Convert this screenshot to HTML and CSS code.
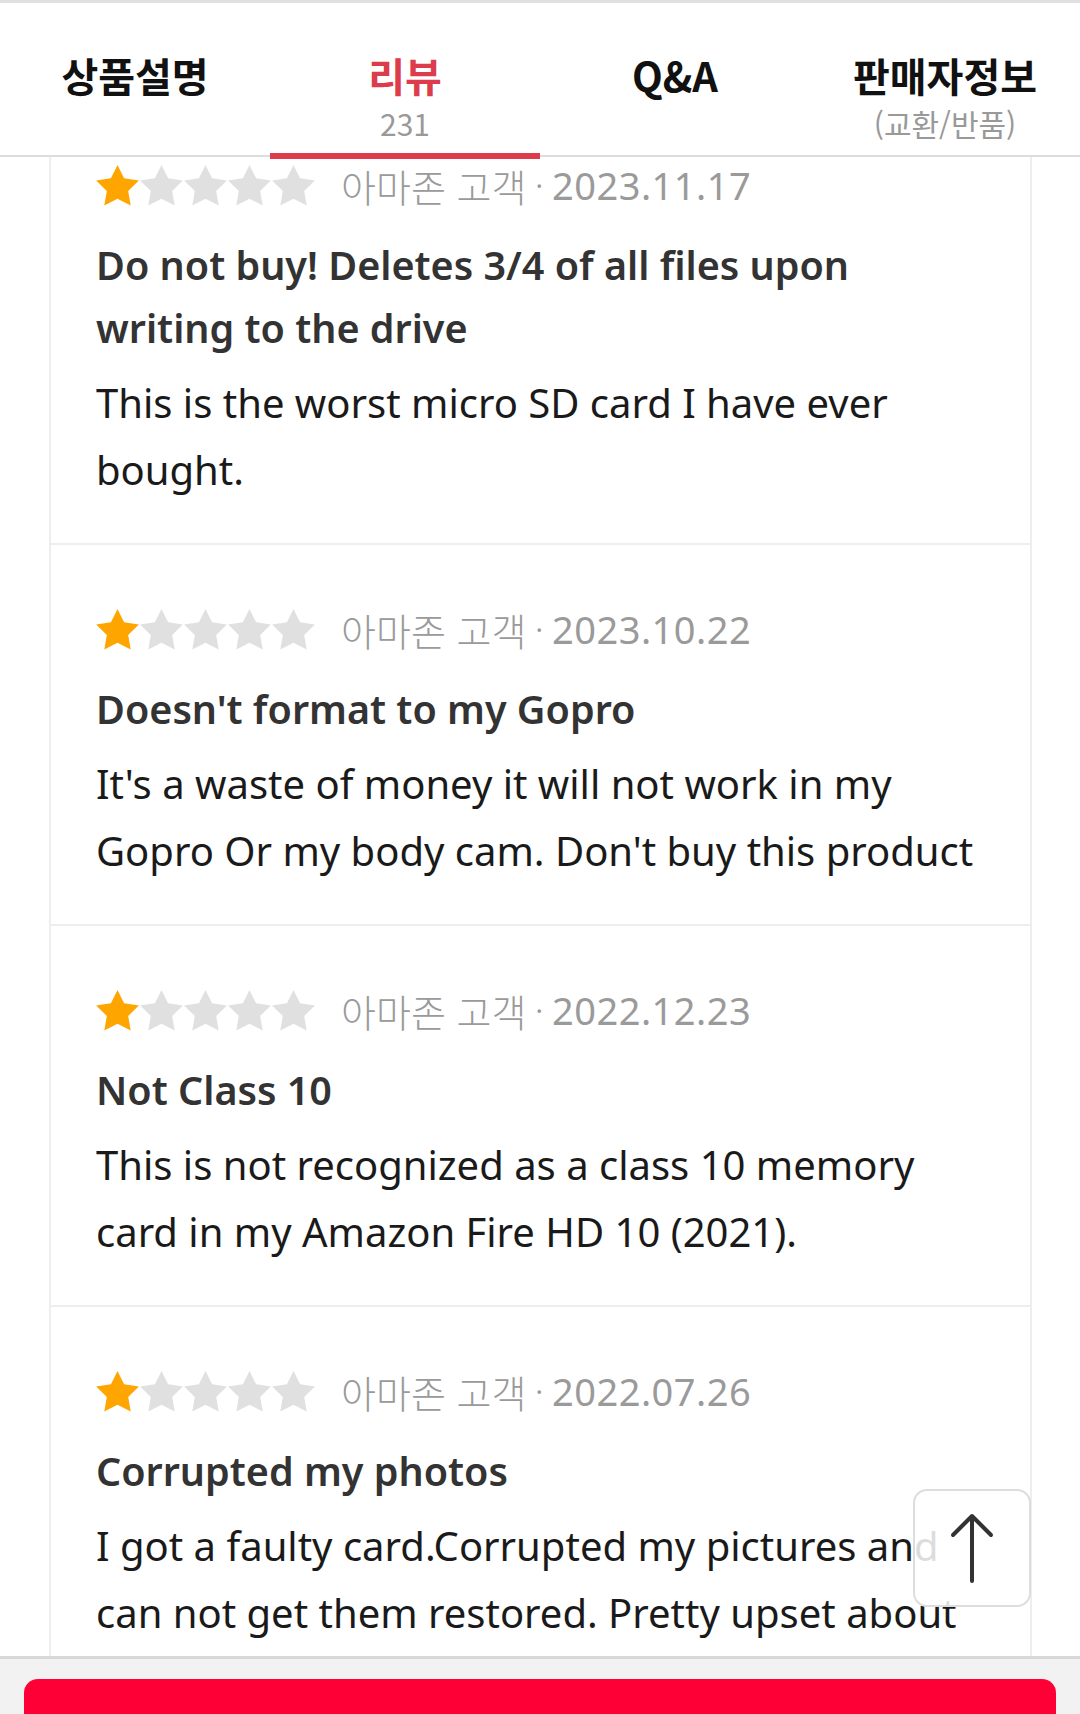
FILE: index.html
```html
<!DOCTYPE html>
<html lang="ko">
<head>
  <meta charset="UTF-8">
  <title>리뷰</title>
  <link rel="stylesheet" href="styles.css">
</head>
<body>
  <div id="page">
    <div id="tabs">
      <div class="tab">
        <span class="tab-title">상품설명</span>
      </div>
      <div class="tab active">
        <span class="tab-title">리뷰</span>
        <span class="tab-sub">231</span>
      </div>
      <div class="tab">
        <span class="tab-title">Q&amp;A</span>
      </div>
      <div class="tab">
        <span class="tab-title">판매자정보</span>
        <span class="tab-sub">(교환/반품)</span>
      </div>
    </div>

    <div id="reviews">
      <div class="review-list">
        <div class="review">
          <div class="review-meta">
            <div class="stars">
              <svg class="star on" viewBox="2 2 20 19.2"><polygon points="12,2 15.09,8.26 22,9.27 17,14.14 18.18,21.02 12,17.77 5.82,21.02 7,14.14 2,9.27 8.91,8.26"/></svg>
              <svg class="star" viewBox="2 2 20 19.2"><polygon points="12,2 15.09,8.26 22,9.27 17,14.14 18.18,21.02 12,17.77 5.82,21.02 7,14.14 2,9.27 8.91,8.26"/></svg>
              <svg class="star" viewBox="2 2 20 19.2"><polygon points="12,2 15.09,8.26 22,9.27 17,14.14 18.18,21.02 12,17.77 5.82,21.02 7,14.14 2,9.27 8.91,8.26"/></svg>
              <svg class="star" viewBox="2 2 20 19.2"><polygon points="12,2 15.09,8.26 22,9.27 17,14.14 18.18,21.02 12,17.77 5.82,21.02 7,14.14 2,9.27 8.91,8.26"/></svg>
              <svg class="star" viewBox="2 2 20 19.2"><polygon points="12,2 15.09,8.26 22,9.27 17,14.14 18.18,21.02 12,17.77 5.82,21.02 7,14.14 2,9.27 8.91,8.26"/></svg>
            </div>
            <span class="author">아마존 고객</span><span class="dot">·</span><span class="date">2023.11.17</span>
          </div>
          <div class="review-title">Do not buy! Deletes 3/4 of all files upon writing to the drive</div>
          <div class="review-body">This is the worst micro SD card I have ever bought.</div>
        </div>

        <div class="review">
          <div class="review-meta">
            <div class="stars">
              <svg class="star on" viewBox="2 2 20 19.2"><polygon points="12,2 15.09,8.26 22,9.27 17,14.14 18.18,21.02 12,17.77 5.82,21.02 7,14.14 2,9.27 8.91,8.26"/></svg>
              <svg class="star" viewBox="2 2 20 19.2"><polygon points="12,2 15.09,8.26 22,9.27 17,14.14 18.18,21.02 12,17.77 5.82,21.02 7,14.14 2,9.27 8.91,8.26"/></svg>
              <svg class="star" viewBox="2 2 20 19.2"><polygon points="12,2 15.09,8.26 22,9.27 17,14.14 18.18,21.02 12,17.77 5.82,21.02 7,14.14 2,9.27 8.91,8.26"/></svg>
              <svg class="star" viewBox="2 2 20 19.2"><polygon points="12,2 15.09,8.26 22,9.27 17,14.14 18.18,21.02 12,17.77 5.82,21.02 7,14.14 2,9.27 8.91,8.26"/></svg>
              <svg class="star" viewBox="2 2 20 19.2"><polygon points="12,2 15.09,8.26 22,9.27 17,14.14 18.18,21.02 12,17.77 5.82,21.02 7,14.14 2,9.27 8.91,8.26"/></svg>
            </div>
            <span class="author">아마존 고객</span><span class="dot">·</span><span class="date">2023.10.22</span>
          </div>
          <div class="review-title">Doesn't format to my Gopro</div>
          <div class="review-body">It's a waste of money it will not work in my Gopro Or my body cam. Don't buy this product</div>
        </div>

        <div class="review">
          <div class="review-meta">
            <div class="stars">
              <svg class="star on" viewBox="2 2 20 19.2"><polygon points="12,2 15.09,8.26 22,9.27 17,14.14 18.18,21.02 12,17.77 5.82,21.02 7,14.14 2,9.27 8.91,8.26"/></svg>
              <svg class="star" viewBox="2 2 20 19.2"><polygon points="12,2 15.09,8.26 22,9.27 17,14.14 18.18,21.02 12,17.77 5.82,21.02 7,14.14 2,9.27 8.91,8.26"/></svg>
              <svg class="star" viewBox="2 2 20 19.2"><polygon points="12,2 15.09,8.26 22,9.27 17,14.14 18.18,21.02 12,17.77 5.82,21.02 7,14.14 2,9.27 8.91,8.26"/></svg>
              <svg class="star" viewBox="2 2 20 19.2"><polygon points="12,2 15.09,8.26 22,9.27 17,14.14 18.18,21.02 12,17.77 5.82,21.02 7,14.14 2,9.27 8.91,8.26"/></svg>
              <svg class="star" viewBox="2 2 20 19.2"><polygon points="12,2 15.09,8.26 22,9.27 17,14.14 18.18,21.02 12,17.77 5.82,21.02 7,14.14 2,9.27 8.91,8.26"/></svg>
            </div>
            <span class="author">아마존 고객</span><span class="dot">·</span><span class="date">2022.12.23</span>
          </div>
          <div class="review-title">Not Class 10</div>
          <div class="review-body">This is not recognized as a class 10 memory card in my Amazon Fire HD 10 (2021).</div>
        </div>

        <div class="review">
          <div class="review-meta">
            <div class="stars">
              <svg class="star on" viewBox="2 2 20 19.2"><polygon points="12,2 15.09,8.26 22,9.27 17,14.14 18.18,21.02 12,17.77 5.82,21.02 7,14.14 2,9.27 8.91,8.26"/></svg>
              <svg class="star" viewBox="2 2 20 19.2"><polygon points="12,2 15.09,8.26 22,9.27 17,14.14 18.18,21.02 12,17.77 5.82,21.02 7,14.14 2,9.27 8.91,8.26"/></svg>
              <svg class="star" viewBox="2 2 20 19.2"><polygon points="12,2 15.09,8.26 22,9.27 17,14.14 18.18,21.02 12,17.77 5.82,21.02 7,14.14 2,9.27 8.91,8.26"/></svg>
              <svg class="star" viewBox="2 2 20 19.2"><polygon points="12,2 15.09,8.26 22,9.27 17,14.14 18.18,21.02 12,17.77 5.82,21.02 7,14.14 2,9.27 8.91,8.26"/></svg>
              <svg class="star" viewBox="2 2 20 19.2"><polygon points="12,2 15.09,8.26 22,9.27 17,14.14 18.18,21.02 12,17.77 5.82,21.02 7,14.14 2,9.27 8.91,8.26"/></svg>
            </div>
            <span class="author">아마존 고객</span><span class="dot">·</span><span class="date">2022.07.26</span>
          </div>
          <div class="review-title">Corrupted my photos</div>
          <div class="review-body">I got a faulty card.Corrupted my pictures and can not get them restored. Pretty upset about this.</div>
        </div>
      </div>
    </div>

    <div id="footer">
      <button class="buy-btn"></button>
    </div>

    <button id="to-top">
      <svg viewBox="0 0 80 80">
        <path d="M40 73 V8 M21 27 L40 8 L59 27" fill="none" stroke="#333" stroke-width="4" stroke-linecap="round" stroke-linejoin="round"/>
      </svg>
    </button>
  </div>
</body>
</html>
```

FILE: styles.css
```css
html, body { margin: 0; padding: 0; background: #fff; }
body { font-family: "Noto Sans", "Noto Sans CJK KR", sans-serif; color: #333; }

#page {
  height: 1714px;
  display: flex;
  flex-direction: column;
  overflow: hidden;
}

#tabs {
  display: grid;
  grid-template-columns: repeat(4, 1fr);
  border-top: 3px solid #e0e0e0;
  border-bottom: 2px solid #ddd;
  height: 152px;
  flex-shrink: 0;
  font-family: "Noto Sans CJK KR", "Noto Sans", sans-serif;
}
.tab {
  position: relative;
  display: flex;
  flex-direction: column;
  align-items: center;
  padding-top: 48px;
}
.tab-title {
  font-size: 40px;
  font-weight: bold;
  line-height: 48px;
  color: #111;
}
.tab-sub {
  font-size: 30px;
  line-height: 36px;
  margin-top: 6px;
  color: #999;
}
.tab.active .tab-title { color: #dc3c4c; }
.tab.active::after {
  content: "";
  position: absolute;
  left: 0;
  right: 0;
  bottom: -4px;
  height: 6px;
  background: #dc3c4c;
}

#reviews {
  flex: 1;
  overflow: hidden;
  padding: 0 48px 0 49px;
}
.review-list { margin-top: -56px; }

.review {
  border: 2px solid #eee;
  border-top: none;
  padding: 62px 50px 40px 45px;
}

.review-meta {
  display: flex;
  align-items: center;
  height: 44px;
  font-size: 38px;
  color: #9a9a9a;
}
.stars { display: flex; gap: 1px; margin-right: 26px; }
.star { width: 43px; height: 41px; fill: #e0e0e0; }
.star.on { fill: #ffa500; }
.author { font-family: "Noto Sans CJK KR", sans-serif; font-weight: 300; }
.dot { margin: 0 9px; font-size: 28px; }
.date { letter-spacing: 0.5px; }

.review-title {
  margin-top: 27px;
  font-size: 39.5px;
  line-height: 63px;
  font-weight: 600;
  color: #333;
}
.review-body {
  margin-top: 9px;
  font-size: 40px;
  line-height: 67px;
  color: #1a1a1a;
}

#footer {
  flex-shrink: 0;
  box-sizing: border-box;
  height: 58px;
  border-top: 3px solid #d8d8d8;
  background: #f2f2f2;
  padding: 20px 24px 0 24px;
}
.buy-btn {
  display: block;
  width: 100%;
  height: 80px;
  border: none;
  border-radius: 14px;
  background: #ff0036;
}

#to-top {
  position: fixed;
  right: 49px;
  bottom: 107px;
  width: 118px;
  height: 118px;
  border: 2px solid #ddd;
  border-radius: 14px;
  background: rgba(255,255,255,0.85);
  display: flex;
  align-items: center;
  justify-content: center;
  padding: 0;
}
#to-top svg { width: 80px; height: 80px; }
```
